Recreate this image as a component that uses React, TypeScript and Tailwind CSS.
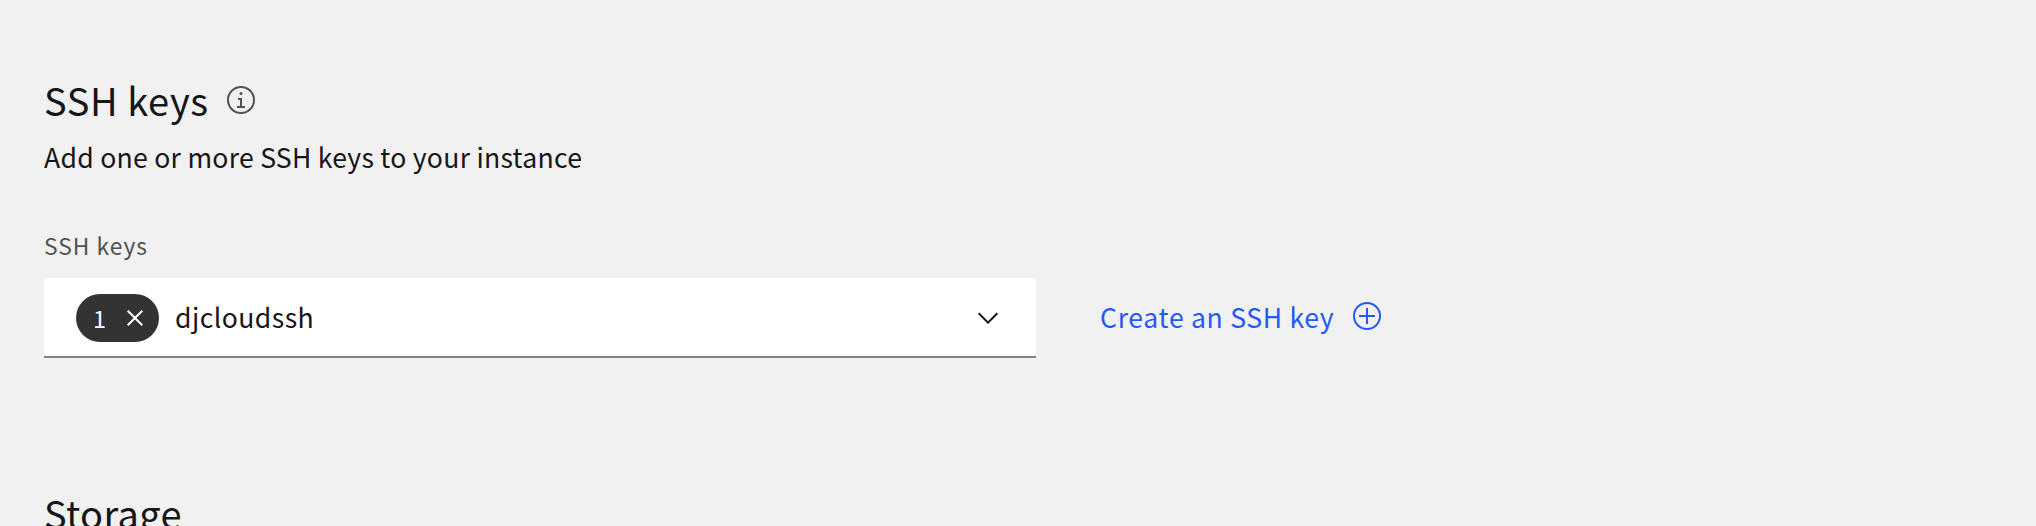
function InfoIcon() {
  return (
    <svg viewBox="0 0 32 32" className="size-8 shrink-0 fill-[#525252]" aria-hidden="true">
      <path d="M17 22V14H13V16H15V22H12V24H20V22H17Z" />
      <path d="M16 8a1.5 1.5 0 1 0 1.5 1.5A1.5 1.5 0 0 0 16 8Z" />
      <path d="M16 30A14 14 0 1 1 30 16 14 14 0 0 1 16 30ZM16 4A12 12 0 1 0 28 16 12 12 0 0 0 16 4Z" />
    </svg>
  );
}

function AddIcon() {
  return (
    <svg viewBox="0 0 32 32" className="size-8 shrink-0 fill-current" aria-hidden="true">
      <path d="M16 4A12 12 0 1 1 4 16 12 12 0 0 1 16 4M16 2A14 14 0 1 0 30 16 14 14 0 0 0 16 2Z" />
      <path d="M24 15H17V8H15V15H8V17H15V24H17V17H24Z" />
    </svg>
  );
}

function CloseIcon() {
  return (
    <svg viewBox="0 0 32 32" className="size-8 shrink-0 fill-white" aria-hidden="true">
      <path d="M24 9.4 22.6 8 16 14.6 9.4 8 8 9.4 14.6 16 8 22.6 9.4 24 16 17.4 22.6 24 24 22.6 17.4 16 24 9.4Z" />
    </svg>
  );
}

function ChevronIcon() {
  return (
    <svg viewBox="0 0 16 16" className="size-8 shrink-0 fill-[#161616]" aria-hidden="true">
      <path d="M8 11 3 6 3.7 5.3 8 9.6 12.3 5.3 13 6Z" />
    </svg>
  );
}

export default function App() {
  return (
    <main className="h-[526px] overflow-hidden bg-[#f1f1f1] px-11 pt-[76px] font-['Noto_Sans_CJK_JP',sans-serif] text-[#161616]">
      <section className="h-[413px]">
        <div className="flex h-12 items-start">
          <h2 className="w-[181px] whitespace-nowrap text-[38px] leading-[48px] tracking-[0.6px]">SSH keys</h2>
          <div className="pt-2">
            <InfoIcon />
          </div>
        </div>
        <p className="mt-[15px] text-[26.6px] leading-9 tracking-[0.26px]">Add one or more SSH keys to your instance</p>
        <label className="mt-[55px] block text-[22.8px] leading-8 tracking-[1px] text-[#525252]">SSH keys</label>
        <div className="mt-4 flex gap-16">
          <div className="flex h-20 w-[992px] items-center border-b-2 border-[#828282] bg-white pt-0.5 pr-8 pl-8">
            <span className="flex h-12 w-[83px] items-center rounded-full bg-[#333333] pl-[17px] text-white">
              <span className="w-[26px] text-[23.5px] leading-8">1</span>
              <CloseIcon />
            </span>
            <span className="ml-4 flex-1 pb-0.5 text-[26.6px] leading-9 tracking-[0.45px]">djcloudssh</span>
            <ChevronIcon />
          </div>
          <a href="#" className="flex h-20 items-start text-[#1f5cf7]">
            <span className="w-[251px] whitespace-nowrap pt-[21px] text-[26.6px] leading-9 tracking-[0.68px]">Create an SSH key</span>
            <span className="pt-[22px]">
              <AddIcon />
            </span>
          </a>
        </div>
      </section>
      <h2 className="text-[38px] leading-[48px] tracking-[0.35px]">Storage</h2>
    </main>
  );
}
